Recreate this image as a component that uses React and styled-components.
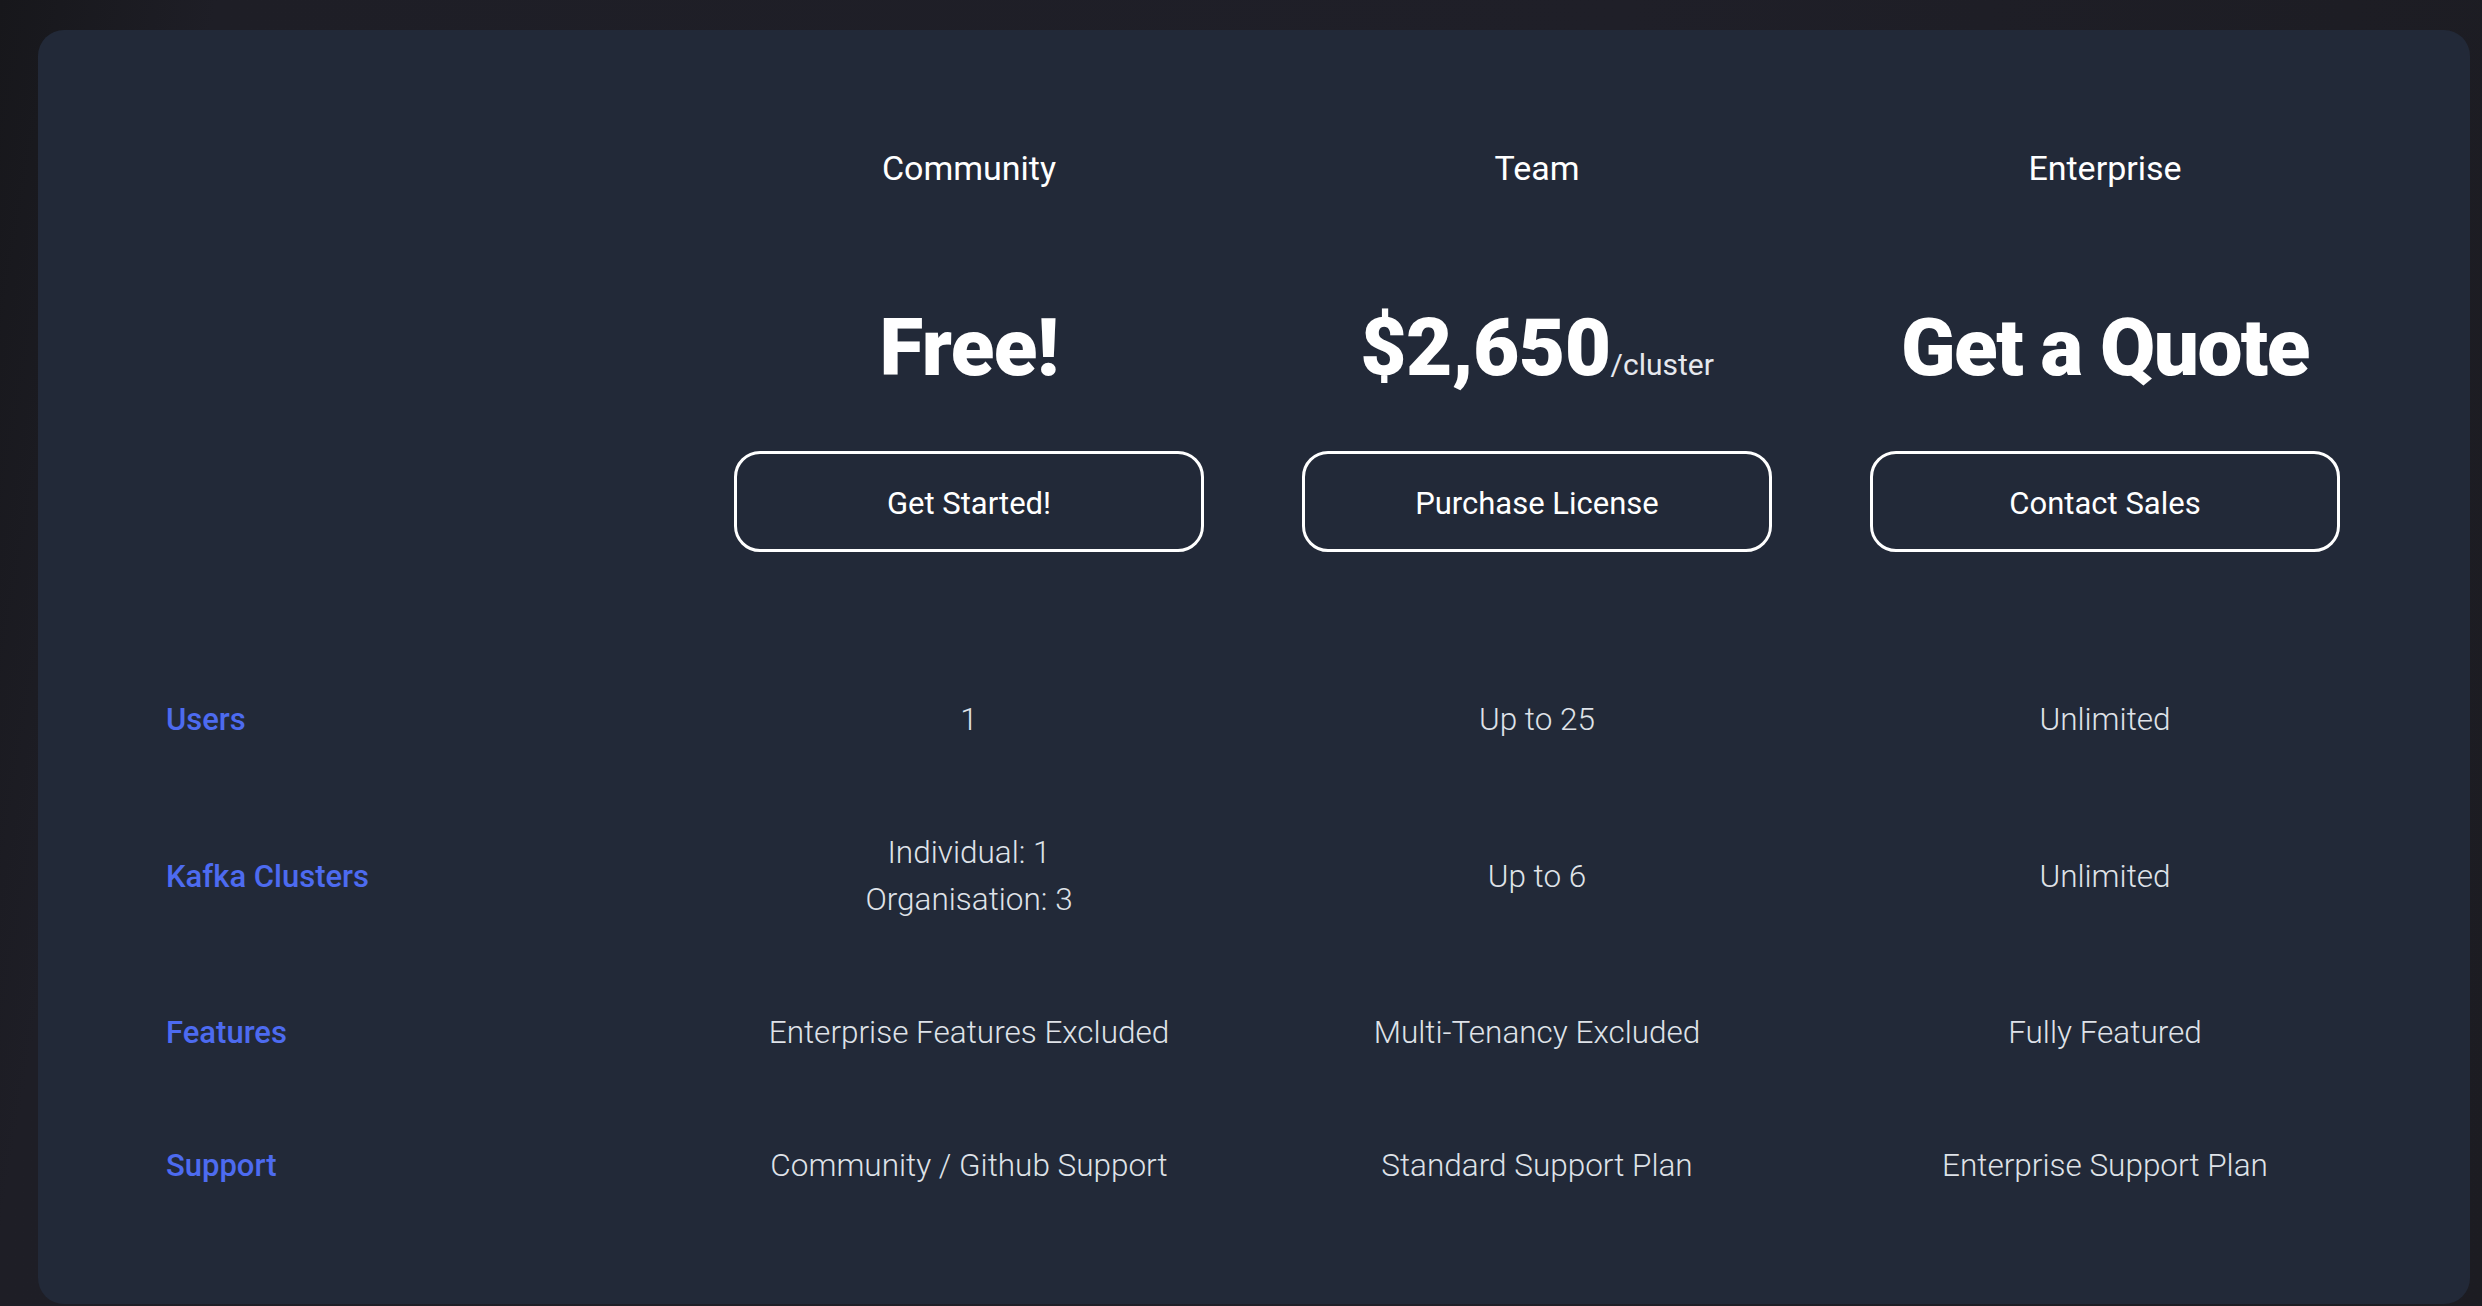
import styled, { createGlobalStyle } from "styled-components";

const GlobalStyle = createGlobalStyle`
  * {
    box-sizing: border-box;
  }
  html, body {
    margin: 0;
    padding: 0;
  }
  body {
    min-height: 1306px;
    background: linear-gradient(100deg, #17171b 0%, #1e1e26 8%, #1f1f28 60%, #1c1c22 100%);
    font-family: "Roboto", "Liberation Sans", sans-serif;
  }
`;

const Page = styled.div`
  padding: 30px 12px 0 38px;
  height: 1306px;
  overflow: hidden;
`;

const Card = styled.div`
  background: #222938;
  border-radius: 26px;
  padding: 118px 81px 72px 128px;
`;

const Grid = styled.div`
  display: grid;
  grid-template-columns: 519px repeat(3, 568px);
`;

const PlanHead = styled.div`
  display: flex;
  flex-direction: column;
  align-items: center;
`;

const PlanName = styled.h3`
  margin: 0;
  font-size: 34px;
  line-height: 40px;
  font-weight: 400;
  color: #ffffff;
`;

const Price = styled.div`
  margin-top: 120px;
  height: 80px;
  font-size: 80px;
  line-height: 80px;
  font-weight: 900;
  color: #ffffff;
  letter-spacing: ${(p) => (p.$tight ? "-1.5px" : "-0.5px")};
  white-space: nowrap;
`;

const Per = styled.span`
  font-size: 30px;
  line-height: 0;
  font-weight: 400;
  letter-spacing: 0;
  color: #e6e8ee;
`;

const PlanButton = styled.button`
  margin-top: 63px;
  width: 470px;
  height: 101px;
  padding: 4px 0 0;
  border: 3px solid #ffffff;
  border-radius: 26px;
  background: transparent;
  color: #ffffff;
  font-family: "Roboto", "Liberation Sans", sans-serif;
  font-size: 31px;
  font-weight: 400;
  cursor: pointer;
`;

const Rows = styled.div`
  margin-top: 101px;
`;

const Row = styled.div`
  display: grid;
  grid-template-columns: 519px repeat(3, 568px);
  align-items: center;
  padding: 43px 0;
`;

const Label = styled.div`
  font-size: 31px;
  line-height: 47px;
  font-weight: 500;
  color: #4d6bf0;
`;

const Value = styled.div`
  text-align: center;
  font-size: 31.5px;
  line-height: 47px;
  font-weight: 300;
  color: #dfe2e8;
`;

const plans = [
  { name: "Community", price: "Free!", button: "Get Started!" },
  { name: "Team", price: "$2,650", per: "/cluster", button: "Purchase License" },
  { name: "Enterprise", price: "Get a Quote", button: "Contact Sales", tight: true },
];

const features = [
  { label: "Users", values: [["1"], ["Up to 25"], ["Unlimited"]] },
  {
    label: "Kafka Clusters",
    values: [["Individual: 1", "Organisation: 3"], ["Up to 6"], ["Unlimited"]],
  },
  {
    label: "Features",
    values: [["Enterprise Features Excluded"], ["Multi-Tenancy Excluded"], ["Fully Featured"]],
  },
  {
    label: "Support",
    values: [["Community / Github Support"], ["Standard Support Plan"], ["Enterprise Support Plan"]],
  },
];

const App = () => {
  return (
    <Page>
      <GlobalStyle />
      <Card>
        <Grid>
          <div />
          {plans.map((plan) => (
            <PlanHead key={plan.name}>
              <PlanName>{plan.name}</PlanName>
              <Price $tight={plan.tight}>
                {plan.price}
                {plan.per && <Per>{plan.per}</Per>}
              </Price>
              <PlanButton>{plan.button}</PlanButton>
            </PlanHead>
          ))}
        </Grid>
        <Rows>
          {features.map((row) => (
            <Row key={row.label}>
              <Label>{row.label}</Label>
              {row.values.map((lines, i) => (
                <Value key={i}>
                  {lines.map((line) => (
                    <div key={line}>{line}</div>
                  ))}
                </Value>
              ))}
            </Row>
          ))}
        </Rows>
      </Card>
    </Page>
  );
};

export default App;
